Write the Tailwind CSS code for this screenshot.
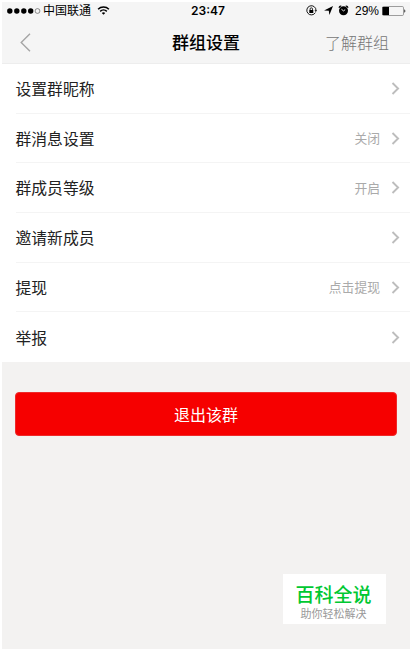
<!DOCTYPE html>
<html lang="zh-CN">

<head>
  <meta charset="UTF-8" />
  <meta name="viewport" content="width=device-width, initial-scale=1.0" />
  <title>群组设置</title>
  <script src="https://cdn.jsdelivr.net/npm/@tailwindcss/browser@4"></script>
</head>

<body class="h-[649px] overflow-hidden bg-white pt-0.5 pr-px pl-0.5 font-['Liberation_Sans','Noto_Sans_CJK_SC',sans-serif]">
  <div class="relative flex h-full flex-col bg-[#f3f2f1]">
    <header class="h-[62px] shrink-0 border-b border-[#ededed] bg-[#f5f5f5]">
      <!-- 状态栏 -->
      <div class="grid h-[17px] grid-cols-3 items-center text-[12px] leading-[17px] text-black">
        <div class="flex items-center pl-[5px] whitespace-nowrap">
          <svg class="mr-[2px]" width="34" height="6" viewBox="0 0 34 6">
            <circle cx="2.8" cy="3" r="2.7" />
            <circle cx="9.8" cy="3" r="2.7" />
            <circle cx="16.8" cy="3" r="2.7" />
            <circle cx="23.7" cy="3" r="2.7" />
            <circle cx="30.5" cy="3" r="2.4" fill="none" stroke="#444" stroke-width=".6" />
          </svg>
          <span class="translate-y-px">中国联通</span>
          <svg class="ml-1.5" width="13" height="9" viewBox="0 0 12 9" fill="none" stroke="#000" stroke-width="1.5">
            <path d="M.6 3.2a7.6 7.6 0 0 1 10.8 0M2.7 5.4a4.7 4.7 0 0 1 6.6 0" />
            <path d="M6 8.8L4.3 7.1a2.4 2.4 0 0 1 3.4 0z" fill="#000" stroke="none" />
          </svg>
        </div>
        <div class="pl-1 text-center font-['Inter',sans-serif] font-semibold">23:47</div>
        <div class="flex items-center justify-end pr-[4px]">
          <svg class="mr-[7px]" width="11" height="11" viewBox="0 0 11 11" fill="none" stroke="#000">
            <path d="M9.4 7.6A4.6 4.6 0 1 1 10 5.5" stroke-width=".9" />
            <path d="M8.5 5.2h2.5L9.8 6.9z" fill="#000" stroke="none" />
            <path d="M3.3 5h4v3h-4z" fill="#000" stroke="none" />
            <path d="M4.1 5V4a1.2 1.2 0 0 1 2.4 0v1" stroke-width=".8" />
          </svg>
          <svg class="mr-[5px]" width="9" height="9" viewBox="0 0 9 9">
            <path d="M9 0L5.4 9 4.8 4.8 0 4.4z" />
          </svg>
          <svg class="mr-[6px]" width="11" height="11" viewBox="0 0 11 11">
            <circle cx="5.5" cy="5.8" r="4.5" />
            <path d="M1.3 2.9A1.5 1.5 0 0 1 3.2 1.1M7.8 1.1a1.5 1.5 0 0 1 1.9 1.8" fill="none" stroke="#000" stroke-width="1.2" />
            <path d="M3.4 4.2l2.1 1.7 1.7-1.3" fill="none" stroke="#fff" stroke-width=".9" />
          </svg>
          <span class="mr-[3px] translate-y-px">29%</span>
          <svg width="24" height="10" viewBox="0 0 24 10">
            <rect x=".5" y=".5" width="21" height="9" rx="1.2" fill="none" stroke="#777" stroke-width=".7" />
            <path d="M.5 1h6.5v8H.5z" />
            <path d="M22.3 3.3a1.9 1.9 0 0 1 0 3.4z" fill="#222" />
          </svg>
        </div>
      </div>

      <!-- 导航栏 -->
      <nav class="grid h-[46px] grid-cols-3 items-center">
        <a href="#" class="pl-[18px]">
          <svg width="11" height="19" viewBox="0 0 11 19" fill="none" stroke="#a5a5a5" stroke-width="1.4">
            <path d="M10 .7L1.2 9.5l8.8 8.8" />
          </svg>
        </a>
        <h1 class="pt-[3px] text-center text-[17px] leading-6 font-medium whitespace-nowrap text-black">群组设置</h1>
        <a href="#" class="pt-[3px] pr-[21px] text-right text-[16px] leading-6 font-light whitespace-nowrap text-[#777]">了解群组</a>
      </nav>
    </header>

    <!-- 设置列表 -->
    <ul class="h-[298px] shrink-0 bg-white pl-[13.5px] text-[15.8px] text-[#222]">
      <li class="flex h-[49.7px] items-center border-b border-[#f4f4f4] pr-[10px]">
        <span class="flex-1 pt-[3px]">设置群昵称</span>
        <svg width="9" height="13" viewBox="0 0 9 13" fill="none" stroke="#bdbdbd" stroke-width="1.9"><path d="M1.5 1l5.6 5.5L1.5 12" /></svg>
      </li>
      <li class="flex h-[49.7px] items-center border-b border-[#f4f4f4] pr-[10px]">
        <span class="flex-1 pt-[3px]">群消息设置</span>
        <span class="mr-[11px] pt-px text-[12.8px] text-[#aaa]">关闭</span>
        <svg width="9" height="13" viewBox="0 0 9 13" fill="none" stroke="#bdbdbd" stroke-width="1.9"><path d="M1.5 1l5.6 5.5L1.5 12" /></svg>
      </li>
      <li class="flex h-[49.7px] items-center border-b border-[#f4f4f4] pr-[10px]">
        <span class="flex-1 pt-[3px]">群成员等级</span>
        <span class="mr-[11px] pt-px text-[12.8px] text-[#aaa]">开启</span>
        <svg width="9" height="13" viewBox="0 0 9 13" fill="none" stroke="#bdbdbd" stroke-width="1.9"><path d="M1.5 1l5.6 5.5L1.5 12" /></svg>
      </li>
      <li class="flex h-[49.7px] items-center border-b border-[#f4f4f4] pr-[10px]">
        <span class="flex-1 pt-[3px]">邀请新成员</span>
        <svg width="9" height="13" viewBox="0 0 9 13" fill="none" stroke="#bdbdbd" stroke-width="1.9"><path d="M1.5 1l5.6 5.5L1.5 12" /></svg>
      </li>
      <li class="flex h-[49.7px] items-center border-b border-[#f4f4f4] pr-[10px]">
        <span class="flex-1 pt-[3px]">提现</span>
        <span class="mr-[11px] pt-px text-[12.8px] text-[#aaa]">点击提现</span>
        <svg width="9" height="13" viewBox="0 0 9 13" fill="none" stroke="#bdbdbd" stroke-width="1.9"><path d="M1.5 1l5.6 5.5L1.5 12" /></svg>
      </li>
      <li class="flex h-[49.7px] items-center pr-[10px]">
        <span class="flex-1 pt-[3px]">举报</span>
        <svg width="9" height="13" viewBox="0 0 9 13" fill="none" stroke="#bdbdbd" stroke-width="1.9"><path d="M1.5 1l5.6 5.5L1.5 12" /></svg>
      </li>
    </ul>

    <button class="mt-[30px] mr-[13px] ml-[13px] h-11 shrink-0 rounded border border-[#ee2a2a] bg-[#f60000] pt-[3px] text-[16px] text-white">退出该群</button>

    <!-- 右下角水印 -->
    <div class="absolute top-[572px] left-[281px] flex h-[50px] w-[103px] flex-col items-center bg-white pt-[10px] pr-[2px] whitespace-nowrap">
      <div class="text-[19px] leading-[24px] font-medium text-[#00c832]">百科全说</div>
      <div class="text-[11px] leading-[12px] text-[#999]">助你轻松解决</div>
    </div>
  </div>
</body>

</html>
